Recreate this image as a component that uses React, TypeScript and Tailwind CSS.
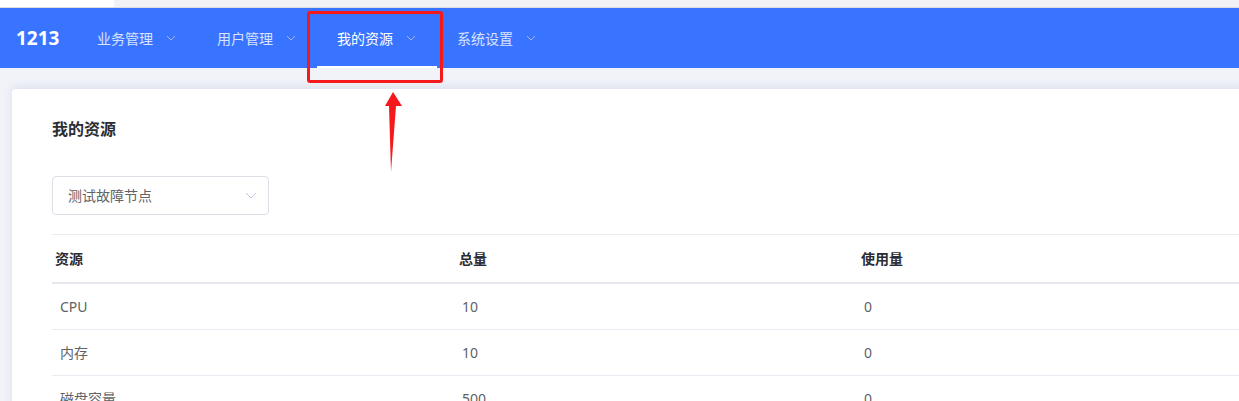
import React from 'react';

const menus = ['业务管理', '用户管理', '我的资源', '系统设置'];
const rows = [
  ['CPU', '10', '0'],
  ['内存', '10', '0'],
  ['磁盘容量', '500', '0'],
];

const Chevron: React.FC<{ className?: string }> = ({ className }) => (
  <svg width="10" height="6" viewBox="0 0 10 6" fill="none" className={className}>
    <path d="M1 1l4 4 4-4" stroke="currentColor" strokeWidth="1" />
  </svg>
);

export default function App() {
  return (
    <div
      className="relative h-[401px] w-full overflow-hidden bg-[#f1f3f9]"
      style={{ fontFamily: '"Noto Sans", "Noto Sans CJK SC", sans-serif' }}
    >
      {/* browser strip */}
      <div className="flex h-[7px]">
        <div className="w-[114px] bg-white" />
        <div className="flex-1 rounded-bl-[4px] bg-[#f1f2f6]" />
      </div>
      <div className="h-px bg-[#dcdde1]" />

      <header className="flex h-[60px] items-stretch bg-[#3874ff]">
        <div className="flex w-[77px] items-center pl-4 text-[19px] font-bold text-white">1213</div>
        {menus.map((m, i) => {
          const active = i === 2;
          return (
            <div key={m} className="relative flex w-[120px] items-center pl-5 text-[14px]">
              <span className={active ? 'text-white' : 'text-white/80'}>{m}</span>
              <Chevron className="ml-[13px] text-[#a9b3ec]" />
              {active && <div className="absolute bottom-0 left-0 right-0 h-[2px] bg-white" />}
            </div>
          );
        })}
      </header>

      <main className="pl-3 pt-[21px]">
        <div className="w-[1260px] rounded-tl-[4px] bg-white pl-10 pt-[28px] shadow-[0_-2px_8px_rgba(180,186,210,0.35)]">
          <h2 className="text-[16px] font-bold leading-6 text-[#2b2d33]">我的资源</h2>

          <div className="mt-[35px] flex h-[39px] w-[217px] items-center justify-between rounded-[4px] border border-[#dcdfe6] pl-[15px] pr-[11px]">
            <span className="text-[14px] text-[#606266]">测试故障节点</span>
            <svg width="12" height="7" viewBox="0 0 12 7" fill="none" className="text-[#c0c6dc]">
              <path d="M1 1l5 5 5-5" stroke="currentColor" strokeWidth="1" />
            </svg>
          </div>

          <div className="mt-[19px] w-[1206px] text-[14px]">
            <div className="grid h-[50px] grid-cols-3 items-center border-y border-t-[#e9ebf2] border-b-[2px] border-b-[#e6e8f0] font-bold text-[#2b2d33]">
              <div className="pl-[3px]">资源</div>
              <div className="pl-[5px]">总量</div>
              <div className="pl-[5px]">使用量</div>
            </div>
            {rows.map((r) => (
              <div key={r[0]} className="grid h-[46px] grid-cols-3 items-center border-b border-[#e9ebf2] text-[#606266]">
                <div className="pl-2">{r[0]}</div>
                <div className="pl-2">{r[1]}</div>
                <div className="pl-2">{r[2]}</div>
              </div>
            ))}
          </div>
        </div>
      </main>

      {/* annotation */}
      <div className="absolute left-[307px] top-[11px] h-[72px] w-[136px] rounded-[3px] border-[3px] border-[#f5191c]" />
      <svg className="absolute left-0 top-0" width="1239" height="401">
        <polygon points="393,92 402,106 396,106 391,172 389,106 385,106" fill="#f5191c" />
      </svg>
    </div>
  );
}
